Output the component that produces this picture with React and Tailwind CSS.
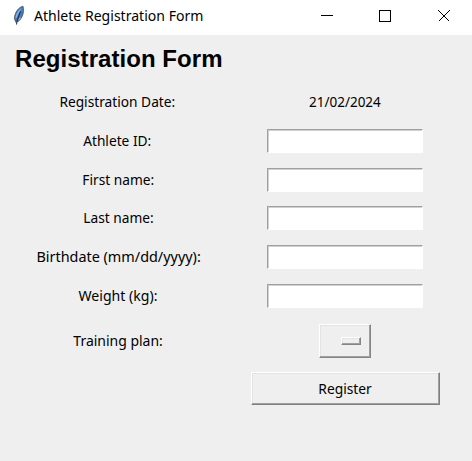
import React from "react";

const fields = [
  { label: "Athlete ID:", row: "h-[39px]", stretch: "scale-x-[0.915]", shift: "pr-[3px]" },
  { label: "First name:", row: "h-[39px]", stretch: "scale-x-[0.915]", shift: "" },
  { label: "Last name:", row: "h-[38px]", stretch: "scale-x-[0.915]", shift: "" },
  { label: "Birthdate (mm/dd/yyyy):", row: "h-[39px]", stretch: "scale-x-[0.96]", shift: "" },
  { label: "Weight (kg):", row: "h-[39px]", stretch: "scale-x-[0.94]", shift: "" },
];

function Label({ children, stretch, shift = "" }) {
  return (
    <div className={"flex w-[237px] shrink-0 justify-center pb-[2px] " + shift}>
      <span className={"inline-block whitespace-nowrap " + stretch}>{children}</span>
    </div>
  );
}

function Feather() {
  return (
    <svg width="14" height="22" viewBox="0 0 14 22" className="-mt-[3px] shrink-0">
      <path d="M11 1.200C7 2 2.700 7 2.300 13.500L3.800 17.200l2.700-1C10 13.500 12.800 7 11 1.200Z" fill="#467cb8" stroke="#4b5158" strokeWidth=".8" />
      <path d="M10 3C6.500 5 4 9 3.400 13l1.200-.3C5.500 9 8 6 10 3Z" fill="#8cbdec" />
      <path d="M8.500 6.500C7.500 9.500 5 14 4.500 19.500" fill="none" stroke="#20252c" strokeWidth="1" />
      <path d="M6.800 14.500 8.500 13" stroke="#fff" strokeWidth=".7" />
    </svg>
  );
}

function TitleBar() {
  return (
    <header className="flex h-[35px] items-center bg-white pl-3">
      <Feather />
      <span className="ml-2 -mt-[5px] inline-block origin-left scale-x-[0.937] whitespace-nowrap text-[15px] leading-5">
        Athlete Registration Form
      </span>
      <svg width="132" height="14" viewBox="0 0 132 14" className="ml-auto mr-[20px] -mt-1 shrink-0" fill="none" stroke="#000" shapeRendering="crispEdges">
        <path d="M1 6.500h12" />
        <path d="M59.500 1.500h11v11h-11z" />
        <path d="m118.500 1.500 11 11m0-11-11 11" strokeWidth="1.1" />
      </svg>
    </header>
  );
}

export default function App() {
  return (
    <div className="flex h-[461px] w-[472px] flex-col overflow-hidden bg-[#efefef] font-['Noto_Sans',sans-serif] text-[15px] leading-5 text-black">
      <TitleBar />
      <h1 className="flex h-12 items-center whitespace-nowrap pl-[15px] font-['Liberation_Sans',sans-serif] text-[24px] font-bold tracking-[0.05px]">
        Registration Form
      </h1>
      <div className="flex h-[38px] items-center">
        <Label stretch="scale-x-[0.915]" shift="pr-[2px]">Registration Date:</Label>
        <div className="flex w-[216px] justify-center pb-[2px]">
          <span className="inline-block scale-x-[0.9]">21/02/2024</span>
        </div>
      </div>
      {fields.map((f) => (
        <div key={f.label} className={"flex items-center " + f.row}>
          <Label stretch={f.stretch} shift={f.shift}>{f.label}</Label>
          <input aria-label={f.label} className="ml-[30px] h-6 w-[156px] border border-t-[#a0a0a0] border-r-white border-b-white border-l-[#a0a0a0] bg-white shadow-[inset_1px_1px_0_#d0d0d0] outline-none" />
        </div>
      ))}
      <div className="flex h-[50px] items-center pt-px">
        <Label stretch="scale-x-[0.93]">Training plan:</Label>
        <button aria-label="Training plan" className="ml-[82px] flex h-[34px] w-[52px] items-center border border-t-white border-r-[#858585] border-b-[#858585] border-l-white pl-[21px] shadow-[inset_-1px_-1px_0_#a0a0a0,inset_1px_1px_0_#e3e3e3]">
          <span className="h-2 w-5 border border-t-white border-r-[#858585] border-b-[#858585] border-l-white shadow-[inset_-1px_-1px_0_#a0a0a0,inset_1px_1px_0_#e3e3e3]" />
        </button>
      </div>
      <div className="mt-[7px] flex pl-[251px]">
        <button className="h-[33px] w-[189px] border border-t-white border-r-[#808080] border-b-[#808080] border-l-white pb-[2px] shadow-[inset_-1px_-1px_0_#a0a0a0,inset_1px_1px_0_#e3e3e3]">
          <span className="inline-block scale-x-[0.92]">Register</span>
        </button>
      </div>
    </div>
  );
}
